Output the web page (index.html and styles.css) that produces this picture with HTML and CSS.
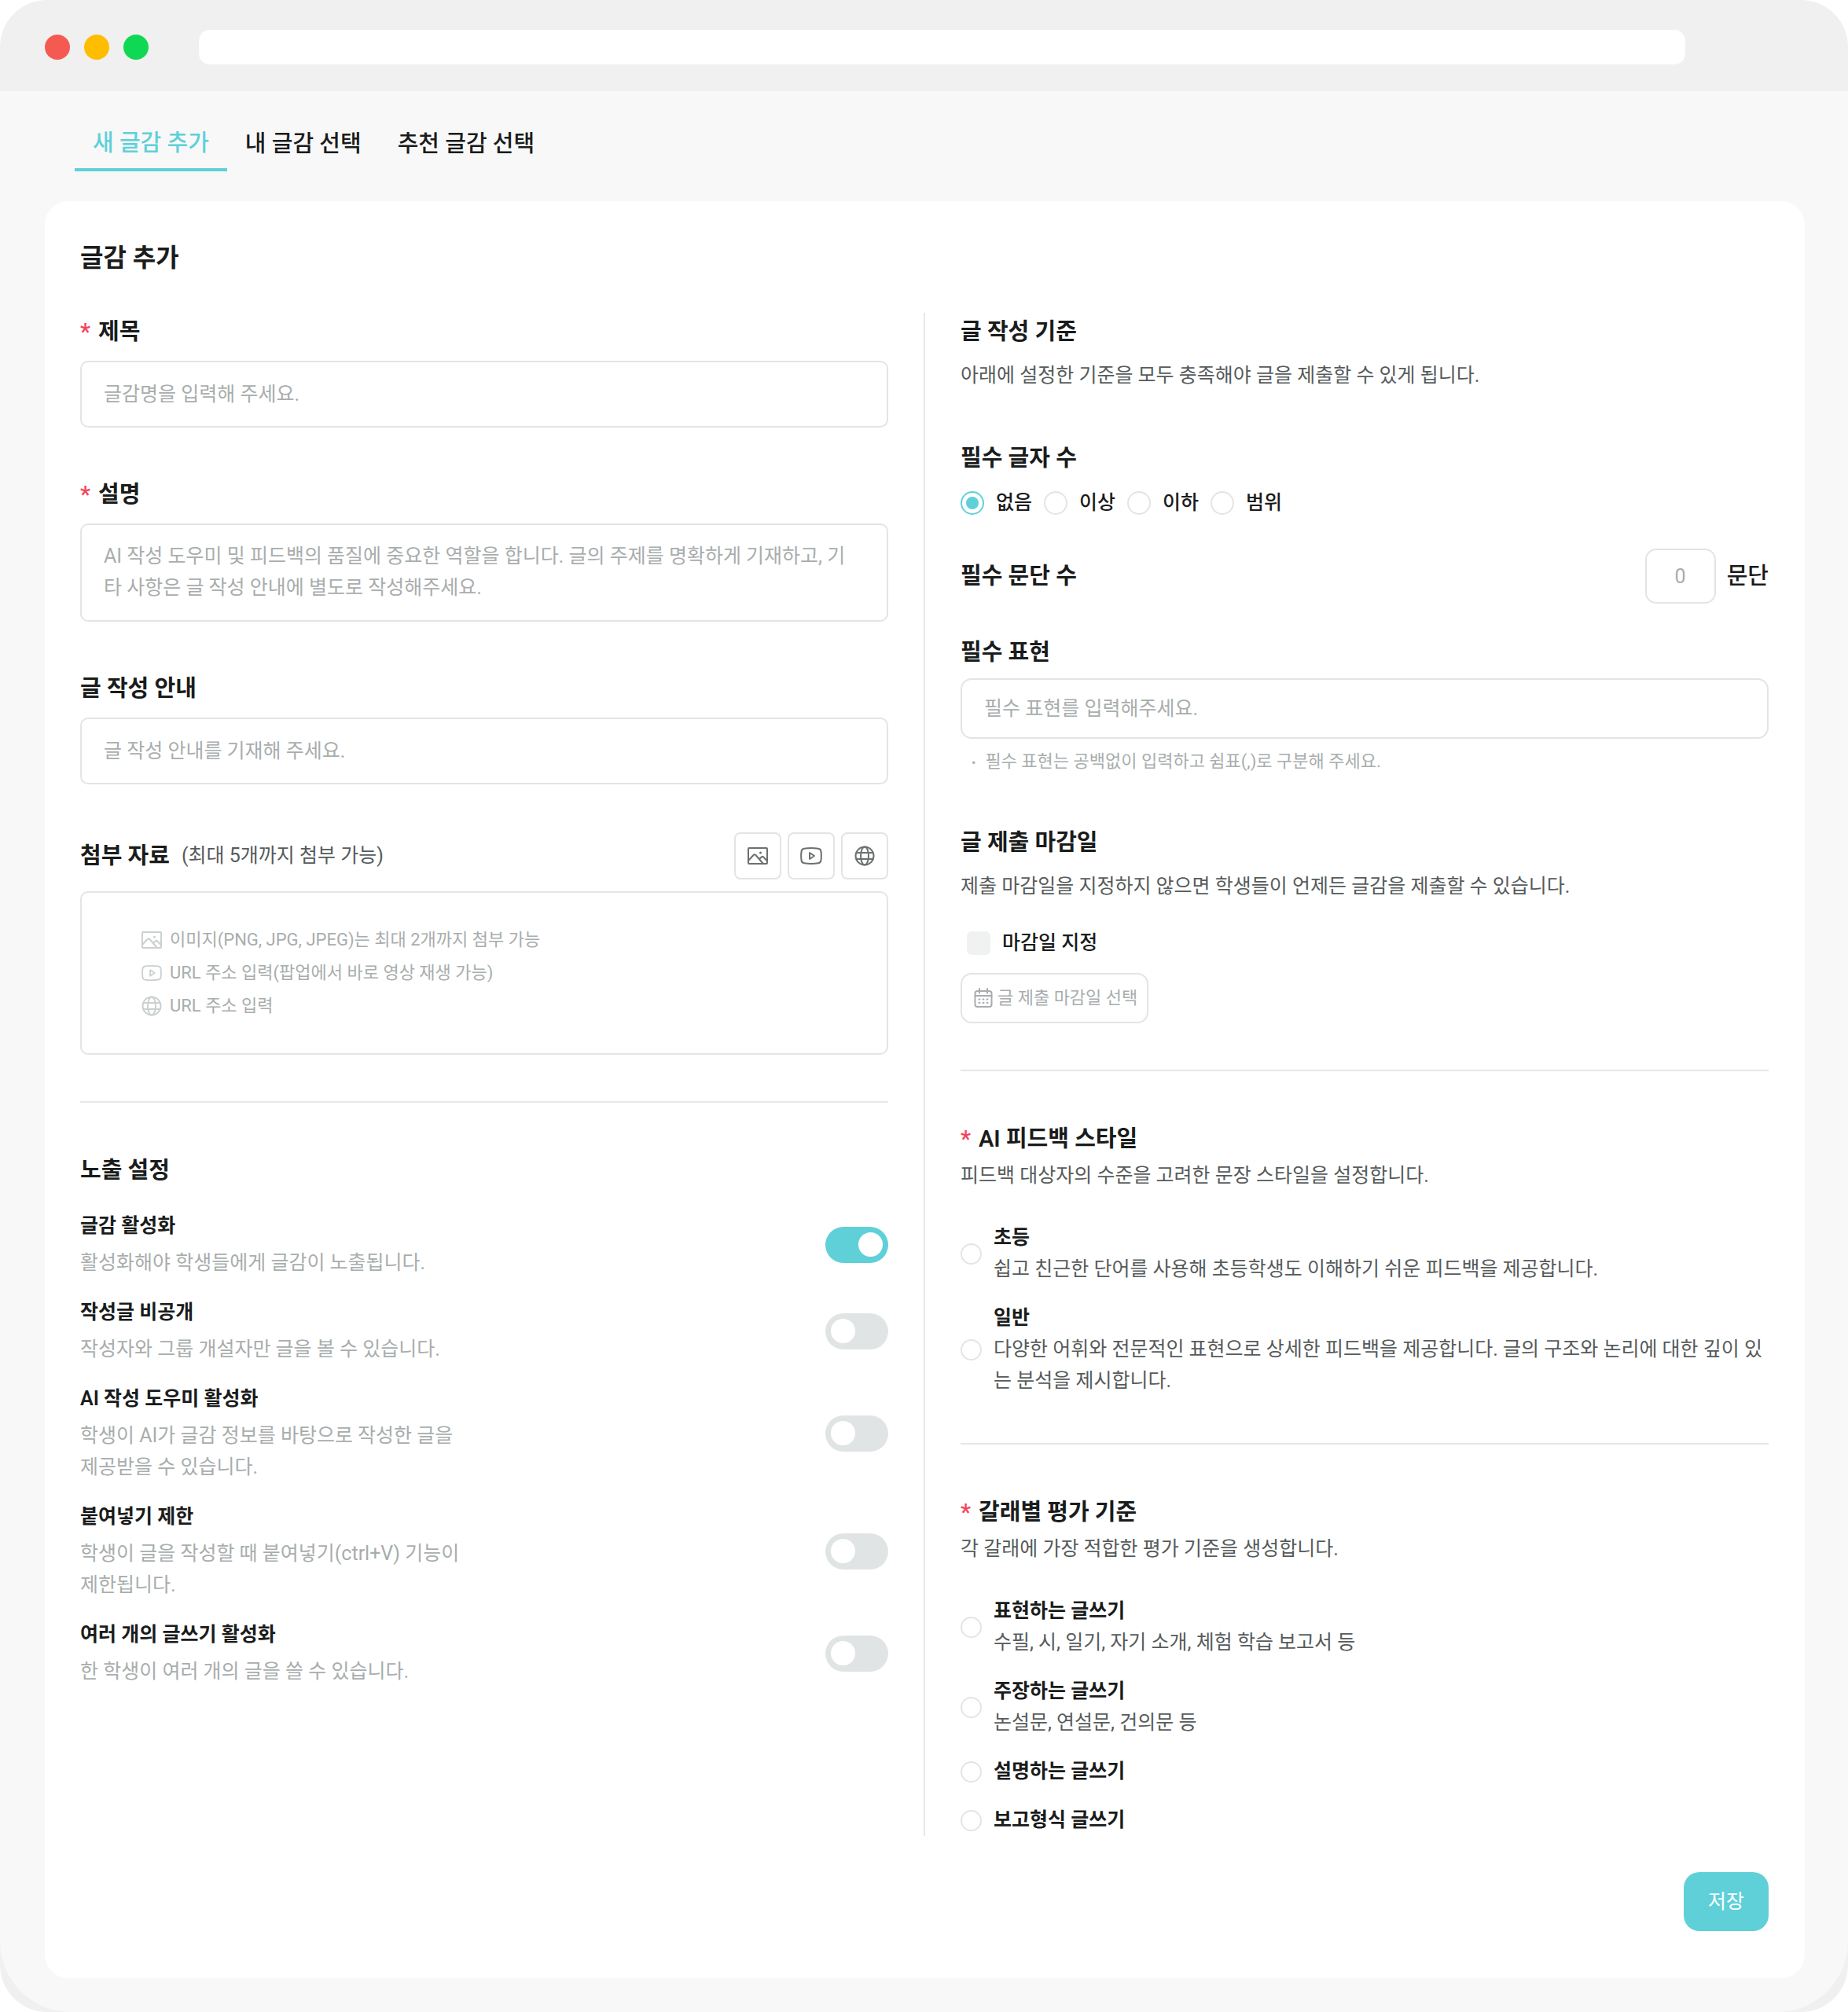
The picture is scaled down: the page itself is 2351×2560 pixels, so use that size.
FILE: index.html
```html
<!DOCTYPE html>
<html lang="ko">
  <head>
    <meta charset="UTF-8" />
    <meta name="viewport" content="width=device-width, initial-scale=1.0" />
    <title>글감 추가</title>
    <link rel="stylesheet" href="styles.css">
  </head>
  <body>
    <!-- Shared icons -->
    <svg class="icon-defs" aria-hidden="true">
      <symbol id="icon-image" viewBox="0 0 26 26">
        <rect x="1" y="3" width="24" height="20" rx="1" />
        <path d="M1.500 18.500 L8 11.500 Q9 10.800 10 11.500 L19.500 22.500 M15 17 L18 14.200 Q19 13.500 20 14.200 L24.500 19" />
        <circle class="icon-fill" cx="16.500" cy="9" r="1.500" />
      </symbol>
      <symbol id="icon-video" viewBox="0 0 28 26">
        <path d="M5 3.800 Q14 2.400 23 3.800 Q26 4.200 26.400 7 Q27.300 13 26.400 19 Q26 21.800 23 22.200 Q14 23.600 5 22.200 Q2 21.800 1.600 19 Q.700 13 1.600 7 Q2 4.200 5 3.800Z" />
        <path d="M12 9 L18 13 L12 17Z" />
      </symbol>
      <symbol id="icon-globe" viewBox="0 0 26 26">
        <circle cx="13" cy="13" r="11.500" />
        <ellipse cx="13" cy="13" rx="5" ry="11.500" />
        <path d="M2.500 9 H23.500 M2.500 17 H23.500" />
      </symbol>
      <symbol id="icon-calendar" viewBox="0 0 24 26">
        <rect x="1.500" y="4" width="21" height="20" rx="3" />
        <path d="M1.500 10 H22.500 M7 1 V6.500 M17 1 V6.500" />
        <path d="M11.500 14.500 H12.500 M16.500 14.500 H17.500 M6.500 14.500 H7.500 M6.500 19 H7.500 M11.500 19 H12.500 M16.500 19 H17.500" />
      </symbol>
    </svg>

    <div class="window">
      <header class="window-bar">
        <span class="dot dot-red"></span>
        <span class="dot dot-yellow"></span>
        <span class="dot dot-green"></span>
        <div class="address"></div>
      </header>

      <main class="page">
        <nav class="tabs">
          <a class="tab active" href="#new">새 글감 추가</a>
          <a class="tab" href="#mine">내 글감 선택</a>
          <a class="tab" href="#recommended">추천 글감 선택</a>
        </nav>

        <form class="card">
          <h1>글감 추가</h1>

          <div class="columns">
            <section class="column">
              <div class="field">
                <label class="label" for="title"><span class="required">*</span>제목</label>
                <input class="input" type="text" id="title" placeholder="글감명을 입력해 주세요." />
              </div>

              <div class="field">
                <label class="label" for="description"><span class="required">*</span>설명</label>
                <textarea class="input" id="description" placeholder="AI 작성 도우미 및 피드백의 품질에 중요한 역할을 합니다. 글의 주제를 명확하게 기재하고, 기타 사항은 글 작성 안내에 별도로 작성해주세요."></textarea>
              </div>

              <div class="field">
                <label class="label" for="guide">글 작성 안내</label>
                <input class="input" type="text" id="guide" placeholder="글 작성 안내를 기재해 주세요." />
              </div>

              <div class="field">
                <div class="attach-head">
                  <h2 class="label">첨부 자료</h2>
                  <span class="attach-limit">(최대 5개까지 첨부 가능)</span>
                  <div class="attach-buttons">
                    <button type="button" aria-label="이미지 첨부"><svg class="icon"><use href="#icon-image" /></svg></button>
                    <button type="button" aria-label="영상 첨부"><svg class="icon icon-wide"><use href="#icon-video" /></svg></button>
                    <button type="button" aria-label="링크 첨부"><svg class="icon"><use href="#icon-globe" /></svg></button>
                  </div>
                </div>
                <ul class="attach-box">
                  <li><svg class="icon"><use href="#icon-image" /></svg>이미지(PNG, JPG, JPEG)는 최대 2개까지 첨부 가능</li>
                  <li><svg class="icon"><use href="#icon-video" /></svg>URL 주소 입력(팝업에서 바로 영상 재생 가능)</li>
                  <li><svg class="icon"><use href="#icon-globe" /></svg>URL 주소 입력</li>
                </ul>
              </div>

              <hr />

              <h2 class="label">노출 설정</h2>
              <div class="switches">
                <label class="switch-row">
                  <span class="switch-text">
                    <strong>글감 활성화</strong>
                    <span>활성화해야 학생들에게 글감이 노출됩니다.</span>
                  </span>
                  <input class="switch" type="checkbox" checked />
                </label>
                <label class="switch-row">
                  <span class="switch-text">
                    <strong>작성글 비공개</strong>
                    <span>작성자와 그룹 개설자만 글을 볼 수 있습니다.</span>
                  </span>
                  <input class="switch" type="checkbox" />
                </label>
                <label class="switch-row">
                  <span class="switch-text">
                    <strong>AI 작성 도우미 활성화</strong>
                    <span>학생이 AI가 글감 정보를 바탕으로 작성한 글을 제공받을 수 있습니다.</span>
                  </span>
                  <input class="switch" type="checkbox" />
                </label>
                <label class="switch-row">
                  <span class="switch-text">
                    <strong>붙여넣기 제한</strong>
                    <span>학생이 글을 작성할 때 붙여넣기(ctrl+V) 기능이 제한됩니다.</span>
                  </span>
                  <input class="switch" type="checkbox" />
                </label>
                <label class="switch-row">
                  <span class="switch-text">
                    <strong>여러 개의 글쓰기 활성화</strong>
                    <span>한 학생이 여러 개의 글을 쓸 수 있습니다.</span>
                  </span>
                  <input class="switch" type="checkbox" />
                </label>
              </div>
            </section>

            <div class="column-line"></div>

            <section class="column">
              <h2 class="label">글 작성 기준</h2>
              <p class="desc">아래에 설정한 기준을 모두 충족해야 글을 제출할 수 있게 됩니다.</p>

              <div class="field">
                <h2 class="label">필수 글자 수</h2>
                <div class="radios">
                  <label><input class="radio" type="radio" name="length" checked />없음</label>
                  <label><input class="radio" type="radio" name="length" />이상</label>
                  <label><input class="radio" type="radio" name="length" />이하</label>
                  <label><input class="radio" type="radio" name="length" />범위</label>
                </div>
              </div>

              <div class="count-row">
                <label class="label" for="paragraphs">필수 문단 수</label>
                <input class="count" type="text" inputmode="numeric" id="paragraphs" placeholder="0" />
                <span>문단</span>
              </div>

              <div class="expression">
                <label class="label" for="expression">필수 표현</label>
                <input class="input" type="text" id="expression" placeholder="필수 표현를 입력해주세요." />
                <ul class="note">
                  <li>필수 표현는 공백없이 입력하고 쉼표(,)로 구분해 주세요.</li>
                </ul>
              </div>

              <div class="deadline">
                <h2 class="label">글 제출 마감일</h2>
                <p class="desc">제출 마감일을 지정하지 않으면 학생들이 언제든 글감을 제출할 수 있습니다.</p>
                <label class="check"><input type="checkbox" />마감일 지정</label>
                <button class="date-button" type="button"><svg class="icon"><use href="#icon-calendar" /></svg>글 제출 마감일 선택</button>
              </div>

              <hr />

              <h2 class="label"><span class="required">*</span>AI 피드백 스타일</h2>
              <p class="desc tight">피드백 대상자의 수준을 고려한 문장 스타일을 설정합니다.</p>
              <div class="options">
                <label class="option">
                  <input class="radio" type="radio" name="style" />
                  <span><strong>초등</strong>쉽고 친근한 단어를 사용해 초등학생도 이해하기 쉬운 피드백을 제공합니다.</span>
                </label>
                <label class="option">
                  <input class="radio" type="radio" name="style" />
                  <span><strong>일반</strong>다양한 어휘와 전문적인 표현으로 상세한 피드백을 제공합니다. 글의 구조와 논리에 대한 깊이 있는 분석을 제시합니다.</span>
                </label>
              </div>

              <hr />

              <h2 class="label"><span class="required">*</span>갈래별 평가 기준</h2>
              <p class="desc tight">각 갈래에 가장 적합한 평가 기준을 생성합니다.</p>
              <div class="options">
                <label class="option">
                  <input class="radio" type="radio" name="genre" />
                  <span><strong>표현하는 글쓰기</strong>수필, 시, 일기, 자기 소개, 체험 학습 보고서 등</span>
                </label>
                <label class="option">
                  <input class="radio" type="radio" name="genre" />
                  <span><strong>주장하는 글쓰기</strong>논설문, 연설문, 건의문 등</span>
                </label>
                <label class="option">
                  <input class="radio" type="radio" name="genre" />
                  <span><strong>설명하는 글쓰기</strong></span>
                </label>
                <label class="option">
                  <input class="radio" type="radio" name="genre" />
                  <span><strong>보고형식 글쓰기</strong></span>
                </label>
              </div>
            </section>
          </div>

          <div class="actions">
            <button class="save" type="submit">저장</button>
          </div>
        </form>
      </main>
    </div>
  </body>
</html>
```
FILE: styles.css
```css
* {
  box-sizing: border-box;
}

body {
  margin: 0;
  background: #fff;
  color: #1a1c1c;
  font-family: Roboto, "Noto Sans CJK KR", sans-serif;
  font-size: 25px;
  line-height: 40px;
}

h1,
h2,
p,
ul {
  margin: 0;
  padding: 0;
}

input,
textarea,
button {
  margin: 0;
  font: inherit;
  color: inherit;
}

button {
  cursor: pointer;
}

hr {
  height: 2px;
  margin: 59px 0 62px;
  border: none;
  background: #e6e8e8;
}

.icon-defs {
  display: none;
}

.icon {
  flex: none;
  width: 26px;
  height: 26px;
  fill: none;
  stroke: currentColor;
  stroke-width: 2;
  stroke-linecap: round;
  stroke-linejoin: round;
}

.icon-wide {
  width: 28px;
}

.icon-fill {
  fill: currentColor;
  stroke: none;
}

/* Browser window */
.window {
  display: flex;
  flex-direction: column;
  min-height: 100vh;
  border-radius: 60px;
  background: #f0f0f0;
  overflow: hidden;
}

.window-bar {
  display: flex;
  align-items: center;
  gap: 18px;
  height: 116px;
  padding: 3px 207px 0 57px;
}

.dot {
  width: 32px;
  height: 32px;
  border-radius: 50%;
}

.dot-red {
  background: #f55a52;
}

.dot-yellow {
  background: #ffbd00;
}

.dot-green {
  background: #0fd852;
}

.address {
  flex: 1;
  height: 44px;
  margin-left: 46px;
  border-radius: 14px;
  background: #fff;
}

.page {
  flex: 1;
  padding: 28px 55px 43px 57px;
  border-radius: 0 0 90px 90px;
  background: #f8f8f8;
}

/* Tabs */
.tabs {
  display: flex;
  margin-bottom: 38px;
  padding-left: 38px;
}

.tab {
  height: 74px;
  padding: 0 23px;
  color: inherit;
  font-size: 29px;
  font-weight: 500;
  line-height: 78px;
  text-decoration: none;
}

.tab.active {
  border-bottom: 4px solid #5fd0d8;
  color: #5fd0d8;
  line-height: 76px;
}

/* Form card */
.card {
  padding: 46px 46px 60px 45px;
  border-radius: 30px;
  background: #fff;
}

h1 {
  margin-bottom: 44px;
  font-size: 32px;
  font-weight: 600;
  line-height: 52px;
}

.columns {
  display: grid;
  grid-template-columns: minmax(0, 1fr) 2px minmax(0, 1fr);
  gap: 45px;
}

.column-line {
  background: #e6e8e8;
}

.label {
  display: block;
  font-size: 29px;
  font-weight: 600;
  line-height: 48px;
}

.required {
  margin-right: 10px;
  color: #f5455c;
}

.field {
  margin-top: 61px;
}

.field:first-child {
  margin-top: 0;
}

.input {
  display: block;
  width: 100%;
  height: 85px;
  margin-top: 13px;
  padding: 0 28px;
  border: 2px solid #e3e5e5;
  border-radius: 10px;
  background: #fff;
}

textarea.input {
  height: 125px;
  padding: 20px 36px 20px 28px;
  resize: none;
  word-break: break-all;
}

::placeholder {
  color: #a8adad;
  opacity: 1;
}

/* Attachments */
.attach-head {
  display: flex;
  align-items: center;
}

.attach-limit {
  margin-left: 15px;
  color: #565b5b;
}

.attach-buttons {
  display: flex;
  gap: 8px;
  margin-left: auto;
}

.attach-buttons button {
  display: flex;
  align-items: center;
  justify-content: center;
  width: 60px;
  height: 60px;
  padding: 0;
  border: 2px solid #e3e5e5;
  border-radius: 8px;
  background: #fff;
  color: #6b7070;
}

.attach-box {
  margin-top: 15px;
  padding: 39px 76px;
  border: 2px solid #e3e5e5;
  border-radius: 10px;
  color: #a8adad;
  font-size: 22px;
  line-height: 42px;
  list-style: none;
}

.attach-box li {
  display: flex;
  align-items: center;
  gap: 10px;
}

.attach-box .icon {
  color: #ccd0d0;
}

/* Switches */
.switches {
  display: flex;
  flex-direction: column;
  gap: 23px;
  margin-top: 27px;
}

.switch-row {
  display: flex;
  align-items: center;
  justify-content: space-between;
}

.switch-text {
  max-width: 510px;
  color: #a8adad;
  word-break: keep-all;
}

.switch-text strong {
  display: block;
  margin-bottom: 7px;
}

strong {
  color: #1a1c1c;
  font-weight: 600;
}

.switch {
  flex: none;
  display: flex;
  align-items: center;
  width: 80px;
  height: 46px;
  padding: 0 7px;
  border-radius: 23px;
  background: #e1e4e4;
  appearance: none;
}

.switch::before {
  content: "";
  width: 31px;
  height: 31px;
  border-radius: 50%;
  background: #fff;
}

.switch:checked {
  justify-content: flex-end;
  background: #5fd0d8;
}

/* Writing criteria */
.desc {
  margin-top: 12px;
  color: #565b5b;
}

.desc.tight {
  margin-top: 3px;
}

.radio {
  flex: none;
  width: 30px;
  height: 30px;
  padding: 5px;
  border: 2px solid #e3e5e5;
  border-radius: 50%;
  background: #fff;
  appearance: none;
}

.radio:checked {
  border-color: #5fd0d8;
  background: #5fd0d8 content-box;
}

.radios {
  display: flex;
  gap: 15px;
  margin-top: 13px;
  font-weight: 500;
}

.radios label {
  display: flex;
  align-items: center;
  gap: 15px;
}

.count-row {
  display: flex;
  align-items: center;
  margin: 38px 0;
  font-size: 29px;
  font-weight: 500;
}

.count {
  width: 90px;
  height: 70px;
  margin-left: auto;
  margin-right: 14px;
  padding: 0;
  border: 2px solid #e3e5e5;
  border-radius: 14px;
  font-size: 25px;
  font-weight: 400;
  text-align: center;
}

.expression .input {
  height: 77px;
  margin-top: 9px;
  border-radius: 14px;
}

.note {
  margin-top: 9px;
  padding-left: 14px;
  color: #a8adad;
  font-size: 22px;
  list-style: none;
}

.note li::before {
  content: "•";
  margin-right: 12px;
  font-size: 16px;
}

.deadline {
  margin-top: 57px;
}

.check {
  display: flex;
  align-items: center;
  gap: 15px;
  margin: 32px 0 18px;
  padding-left: 8px;
  font-weight: 500;
}

.check input {
  width: 30px;
  height: 30px;
  border-radius: 6px;
  background: #f0f2f2;
  appearance: none;
}

.check input:checked {
  background: #5fd0d8;
}

.date-button {
  display: flex;
  align-items: center;
  gap: 5px;
  height: 64px;
  padding: 0 12px 0 14px;
  border: 2px solid #e3e5e5;
  border-radius: 14px;
  background: #fff;
  color: #a8adad;
  font-size: 22px;
}

/* Feedback style and genre */
.options {
  display: flex;
  flex-direction: column;
  gap: 22px;
  margin-top: 39px;
  color: #565b5b;
}

.option {
  display: flex;
  align-items: center;
  gap: 15px;
  word-break: break-all;
}

.option .radio {
  width: 27px;
  height: 27px;
}

.option strong {
  display: block;
}

.actions {
  display: flex;
  justify-content: flex-end;
  margin-top: 46px;
}

.save {
  height: 75px;
  padding: 0 31px;
  border: none;
  border-radius: 20px;
  background: #5fd0d8;
  color: #fff;
  font-weight: 400;
}

@media (max-width: 1200px) {
  .columns {
    grid-template-columns: minmax(0, 1fr);
  }
}
```
